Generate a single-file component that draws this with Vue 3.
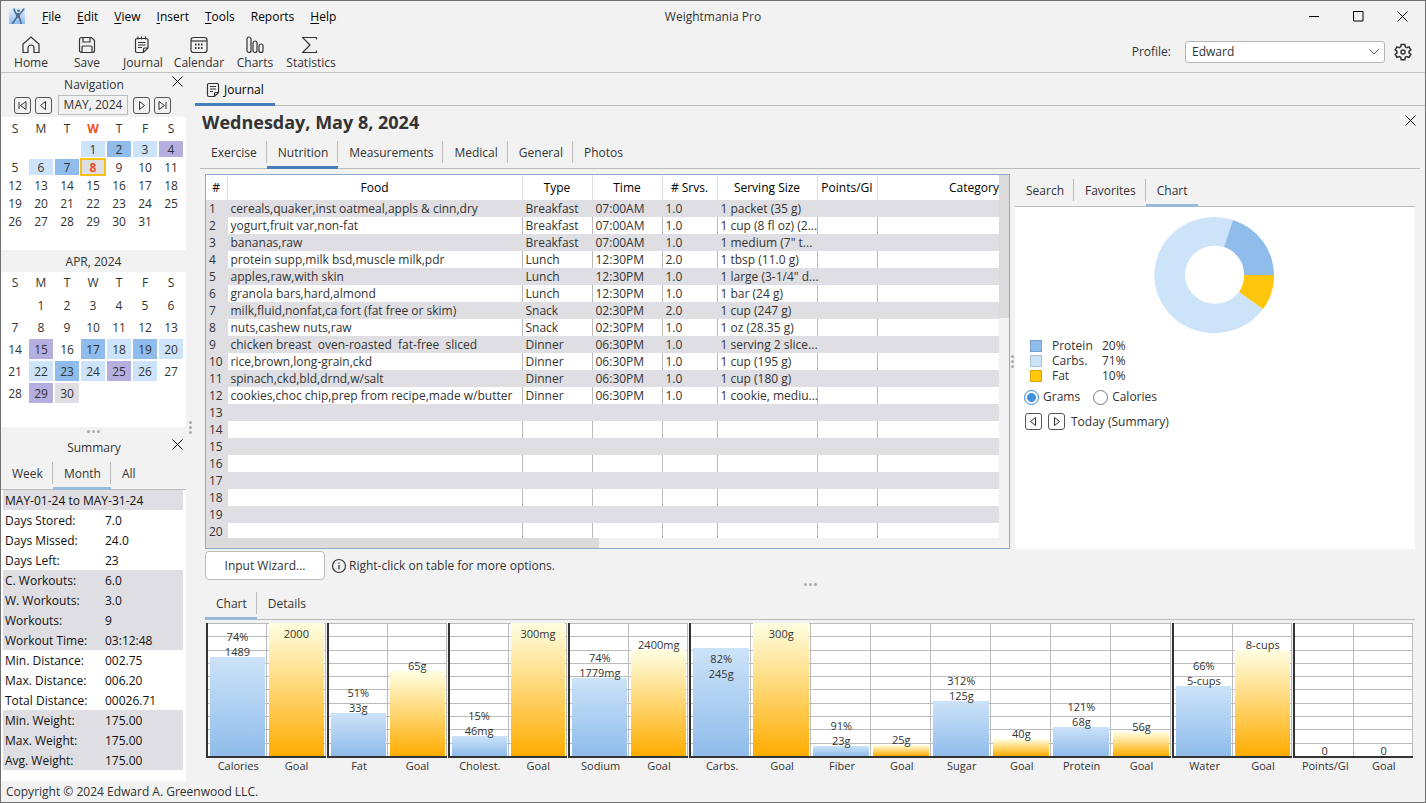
<script setup>
import { ref } from 'vue'

const menus = ['File', 'Edit', 'View', 'Insert', 'Tools', 'Reports', 'Help']
const tools = ['Home', 'Save', 'Journal', 'Calendar', 'Charts', 'Statistics']
const weekdays = ['S', 'M', 'T', 'W', 'T', 'F', 'S']

const journalTabs = ['Exercise', 'Nutrition', 'Measurements', 'Medical', 'General', 'Photos']
const sideTabs = ['Search', 'Favorites', 'Chart']
const summaryTabs = ['Week', 'Month', 'All']
const bottomTabs = ['Chart', 'Details']

const journalTab = ref('Nutrition')
const sideTab = ref('Chart')
const summaryTab = ref('Month')
const bottomTab = ref('Chart')
const profile = ref('Edward')
const unit = ref('grams')

function weeks(offset, days, marks) {
  const cells = []
  for (let i = 0; i < offset; i++) cells.push({ day: '', mark: '' })
  for (let d = 1; d <= days; d++) cells.push({ day: d, mark: marks[d] || '' })
  while (cells.length % 7) cells.push({ day: '', mark: '' })
  const rows = []
  for (let i = 0; i < cells.length; i += 7) rows.push(cells.slice(i, i + 7))
  return rows
}

const may = weeks(3, 31, {
  1: 'light', 2: 'blue', 3: 'light', 4: 'purple', 6: 'light', 7: 'blue', 8: 'today'
})
const april = weeks(1, 30, {
  15: 'purple', 17: 'blue', 18: 'light', 19: 'blue', 20: 'light', 22: 'light', 23: 'blue',
  24: 'light', 25: 'purple', 26: 'light', 29: 'purple', 30: 'grey'
})

const summary = [
  ['Days Stored:', '7.0', false],
  ['Days Missed:', '24.0', false],
  ['Days Left:', '23', false],
  ['C. Workouts:', '6.0', true],
  ['W. Workouts:', '3.0', true],
  ['Workouts:', '9', true],
  ['Workout Time:', '03:12:48', true],
  ['Min. Distance:', '002.75', false],
  ['Max. Distance:', '006.20', false],
  ['Total Distance:', '00026.71', false],
  ['Min. Weight:', '175.00', true],
  ['Max. Weight:', '175.00', true],
  ['Avg. Weight:', '175.00', true]
]

const foods = [
  ['cereals,quaker,inst oatmeal,appls & cinn,dry', 'Breakfast', '07:00AM', '1.0', '1 packet (35 g)'],
  ['yogurt,fruit var,non-fat', 'Breakfast', '07:00AM', '1.0', '1 cup (8 fl oz) (2...'],
  ['bananas,raw', 'Breakfast', '07:00AM', '1.0', '1 medium (7" t...'],
  ['protein supp,milk bsd,muscle milk,pdr', 'Lunch', '12:30PM', '2.0', '1 tbsp (11.0 g)'],
  ['apples,raw,with skin', 'Lunch', '12:30PM', '1.0', '1 large (3-1/4" d...'],
  ['granola bars,hard,almond', 'Lunch', '12:30PM', '1.0', '1 bar (24 g)'],
  ['milk,fluid,nonfat,ca fort (fat free or skim)', 'Snack', '02:30PM', '2.0', '1 cup (247 g)'],
  ['nuts,cashew nuts,raw', 'Snack', '02:30PM', '1.0', '1 oz (28.35 g)'],
  ['chicken breast  oven-roasted  fat-free  sliced', 'Dinner', '06:30PM', '1.0', '1 serving 2 slice...'],
  ['rice,brown,long-grain,ckd', 'Dinner', '06:30PM', '1.0', '1 cup (195 g)'],
  ['spinach,ckd,bld,drnd,w/salt', 'Dinner', '06:30PM', '1.0', '1 cup (180 g)'],
  ['cookies,choc chip,prep from recipe,made w/butter', 'Dinner', '06:30PM', '1.0', '1 cookie, mediu...']
]
while (foods.length < 20) foods.push(['', '', '', '', ''])

const legend = [
  ['Protein', '20%', 'blue'],
  ['Carbs.', '71%', 'light'],
  ['Fat', '10%', 'gold']
]

// size is the bar height out of 133 chart units
const chartGroups = [
  [
    { name: 'Calories', lines: ['74%', '1489'], size: 99 },
    { name: 'Goal', lines: ['2000'], size: 133, goal: true, inside: true }
  ],
  [
    { name: 'Fat', lines: ['51%', '33g'], size: 43 },
    { name: 'Goal', lines: ['65g'], size: 85, goal: true }
  ],
  [
    { name: 'Cholest.', lines: ['15%', '46mg'], size: 20 },
    { name: 'Goal', lines: ['300mg'], size: 133, goal: true, inside: true }
  ],
  [
    { name: 'Sodium', lines: ['74%', '1779mg'], size: 78 },
    { name: 'Goal', lines: ['2400mg'], size: 106, goal: true }
  ],
  [
    { name: 'Carbs.', lines: ['82%', '245g'], size: 108, inside: true },
    { name: 'Goal', lines: ['300g'], size: 133, goal: true, inside: true },
    { name: 'Fiber', lines: ['91%', '23g'], size: 10 },
    { name: 'Goal', lines: ['25g'], size: 11, goal: true },
    { name: 'Sugar', lines: ['312%', '125g'], size: 55 },
    { name: 'Goal', lines: ['40g'], size: 17, goal: true },
    { name: 'Protein', lines: ['121%', '68g'], size: 29 },
    { name: 'Goal', lines: ['56g'], size: 24, goal: true }
  ],
  [
    { name: 'Water', lines: ['66%', '5-cups'], size: 70 },
    { name: 'Goal', lines: ['8-cups'], size: 106, goal: true }
  ],
  [
    { name: 'Points/GI', lines: ['0'], size: 0 },
    { name: 'Goal', lines: ['0'], size: 0, goal: true }
  ]
]
</script>

<template>
  <div class="window">
    <header class="titlebar">
      <div class="title-left">
        <svg class="logo" width="17" height="17" viewBox="0 0 17 17">
          <defs>
            <linearGradient id="logoBg" x1="0" y1="0" x2="0" y2="1">
              <stop offset="0" stop-color="#e3f0fb" />
              <stop offset="1" stop-color="#8fbdf0" />
            </linearGradient>
          </defs>
          <rect width="16" height="16" fill="url(#logoBg)" />
          <path d="M5 .5C5 4 7.500 5 8 8C8.500 10 5 12 3.500 16M15 .5C13.500 4 10.500 5 10 8C10 10 12 12 12 16" fill="none" stroke="#4a7093" stroke-width="1.700" />
          <path d="M7.500 5h3v5h-2.500z" fill="#4a7093" />
          <circle cx="9.500" cy="2.800" r="1.400" fill="#5b7894" />
          <path d="M9 7.500v2" stroke="#cf5b45" stroke-width="1" />
        </svg>
        <nav class="menu">
          <button v-for="m in menus" :key="m" type="button"><span :class="{ key: m !== 'Reports' }">{{ m[0] }}</span>{{ m.slice(1) }}</button>
        </nav>
      </div>
      <div class="title">Weightmania Pro</div>
      <div class="caption">
        <button type="button" aria-label="Minimize">
          <svg width="11" height="11" viewBox="0 0 11 11"><path d="M0 5.500h10" /></svg>
        </button>
        <button type="button" aria-label="Maximize">
          <svg width="11" height="11" viewBox="0 0 11 11"><path d="M.5.500h9.500v9.500H.5z" /></svg>
        </button>
        <button type="button" aria-label="Close">
          <svg width="11" height="11" viewBox="0 0 11 11"><path d="M.5.500l10 10M10.500.500l-10 10" /></svg>
        </button>
      </div>
    </header>

    <div class="toolbar">
      <button v-for="t in tools" :key="t" class="tool" type="button">
        <svg class="icon" width="18" height="18" viewBox="0 0 18 18">
          <path v-if="t === 'Home'" d="M1 9.500V8L9 1l8 7v8.500h-5V12a3 3 0 0 0-6 0v4.500H1z" />
          <template v-else-if="t === 'Save'">
            <path d="M1.500 3.500a2 2 0 0 1 2-2h10l3 3v10a2 2 0 0 1-2 2h-11a2 2 0 0 1-2-2z" />
            <path d="M5 1.500v4.500h7V1.500M4 16.500v-5.500a1 1 0 0 1 1-1h8a1 1 0 0 1 1 1v5.500" />
          </template>
          <template v-else-if="t === 'Journal'">
            <path d="M3 2.500h9a2 2 0 0 1 2 2v7.500l-4.500 4.500H3a1.500 1.500 0 0 1-1.500-1.500V4a1.500 1.500 0 0 1 1.500-1.500zM9.500 16.500v-3.500a1 1 0 0 1 1-1h3.500" />
            <path d="M4 .5v3M7.500.5v3M11.500 .5v3M4 6.500h7.500M4 9h7.500M4 11.500h4" />
          </template>
          <template v-else-if="t === 'Calendar'">
            <rect x="1" y="1.500" width="16" height="15" rx="2.500" />
            <path d="M1 5h16" />
            <path class="dots" d="M8 8.500h1.500M11 8.500h1.500M5 12h1.500M8 12h1.500M11 12h1.500M5 8.500h1.500" />
          </template>
          <template v-else-if="t === 'Charts'">
            <rect x="1" y="1" width="4" height="15.500" rx="2" />
            <rect x="7" y="5" width="4" height="11.500" rx="2" />
            <rect x="13" y="8" width="4" height="8.500" rx="2" />
          </template>
          <path v-else d="M14.500 3.500V1.500H.5l7.500 7.500L.5 16.500h14v-2" />
        </svg>
        <span>{{ t }}</span>
      </button>
      <div class="profile">
        <label for="profile">Profile:</label>
        <div class="select">
          <select id="profile" v-model="profile">
            <option>Edward</option>
          </select>
          <svg class="chevron" width="10" height="6" viewBox="0 0 10 6"><path d="M.5.500L5 5L9.500.500" /></svg>
        </div>
        <button class="gear" type="button" aria-label="Settings">
          <svg class="icon bold" width="18" height="18" viewBox="0 0 18 18">
            <circle cx="9" cy="9" r="2" />
            <path d="M7.200 1.500h3.600l.5 2.300 1.400.8 2.300-.8 1.800 3-1.800 1.500v1.500l1.800 1.500-1.800 3-2.300-.7-1.400.7-.5 2.400H7.200l-.5-2.400-1.400-.7-2.300.7-1.800-3L3 9.800V8.300L1.200 6.800l1.800-3 2.300.8 1.400-.8z" />
          </svg>
        </button>
      </div>
    </div>

    <div class="main">
      <aside class="sidebar">
        <div class="panel-title">
          Navigation
          <button class="close" type="button" aria-label="Close navigation">
            <svg width="11" height="11" viewBox="0 0 11 11"><path d="M.5.500l10 10M10.500.500l-10 10" /></svg>
          </button>
        </div>
        <div class="month-nav">
          <button class="step" type="button" aria-label="First">
            <svg width="11" height="11" viewBox="0 0 11 11"><path d="M2 2v7M9 1.500v8L3.500 5.500z" /></svg>
          </button>
          <button class="step" type="button" aria-label="Previous">
            <svg width="11" height="11" viewBox="0 0 11 11"><path d="M7.500 1.500v8L2.500 5.500z" /></svg>
          </button>
          <button class="month" type="button">MAY, 2024</button>
          <button class="step" type="button" aria-label="Next">
            <svg width="11" height="11" viewBox="0 0 11 11"><path d="M3.500 1.500v8L8.500 5.500z" /></svg>
          </button>
          <button class="step" type="button" aria-label="Last">
            <svg width="11" height="11" viewBox="0 0 11 11"><path d="M9 2v7M2 1.500v8L7.500 5.500z" /></svg>
          </button>
        </div>
        <div class="calendar may">
          <table>
            <thead>
              <tr>
                <th v-for="(w, i) in weekdays" :key="i" :class="{ now: i === 3 }">{{ w }}</th>
              </tr>
            </thead>
            <tbody>
              <tr v-for="(row, r) in may" :key="r">
                <td v-for="(c, i) in row" :key="i"><span :class="c.mark">{{ c.day }}</span></td>
              </tr>
            </tbody>
          </table>
        </div>
        <div class="month-title">APR, 2024</div>
        <div class="calendar april">
          <table>
            <thead>
              <tr>
                <th v-for="(w, i) in weekdays" :key="i">{{ w }}</th>
              </tr>
            </thead>
            <tbody>
              <tr v-for="(row, r) in april" :key="r">
                <td v-for="(c, i) in row" :key="i"><span :class="c.mark">{{ c.day }}</span></td>
              </tr>
            </tbody>
          </table>
        </div>
        <div class="splitter"><i></i><i></i><i></i></div>
        <div class="panel-title">
          Summary
          <button class="close" type="button" aria-label="Close summary">
            <svg width="11" height="11" viewBox="0 0 11 11"><path d="M.5.500l10 10M10.500.500l-10 10" /></svg>
          </button>
        </div>
        <div class="tabs summary-tabs">
          <button v-for="t in summaryTabs" :key="t" class="tab soft" :class="{ active: t === summaryTab }" type="button" @click="summaryTab = t"><span>{{ t }}</span></button>
        </div>
        <div class="summary">
          <table>
            <colgroup>
              <col class="c-name"><col>
            </colgroup>
            <tbody>
              <tr class="shade">
                <td colspan="2">MAY-01-24 to MAY-31-24</td>
              </tr>
              <tr v-for="s in summary" :key="s[0]" :class="{ shade: s[2] }">
                <td>{{ s[0] }}</td>
                <td>{{ s[1] }}</td>
              </tr>
            </tbody>
          </table>
        </div>
      </aside>

      <div class="splitter vertical"><i></i><i></i><i></i></div>

      <main class="journal">
        <div class="doc-tabs">
          <button class="doc-tab" type="button">
            <svg class="icon" width="14" height="16" viewBox="0 0 14 16">
              <path d="M3 1.500h8a1.500 1.500 0 0 1 1.500 1.500v7.500L8.500 14.500H3A1.500 1.500 0 0 1 1.500 13V3A1.500 1.500 0 0 1 3 1.500zM8.500 14.500v-3a1 1 0 0 1 1-1h3M4 4.500h6M4 7h6M4 9.500h3" />
            </svg>
            Journal
          </button>
        </div>
        <div class="heading">
          <h1>Wednesday, May 8, 2024</h1>
          <button class="close" type="button" aria-label="Close journal">
            <svg width="11" height="11" viewBox="0 0 11 11"><path d="M.5.500l10 10M10.500.500l-10 10" /></svg>
          </button>
        </div>
        <div class="tabs journal-tabs">
          <button v-for="t in journalTabs" :key="t" class="tab" :class="{ active: t === journalTab }" type="button" @click="journalTab = t"><span>{{ t }}</span></button>
        </div>

        <div class="work">
          <div class="food-box">
            <div class="food-view">
              <table class="foods">
                <colgroup>
                  <col class="c-num"><col class="c-food"><col class="c-type"><col class="c-time">
                  <col class="c-srvs"><col class="c-size"><col class="c-points"><col class="c-cat">
                </colgroup>
                <thead>
                  <tr>
                    <th>#</th>
                    <th>Food</th>
                    <th>Type</th>
                    <th>Time</th>
                    <th># Srvs.</th>
                    <th>Serving Size</th>
                    <th>Points/GI</th>
                    <th>Category</th>
                  </tr>
                </thead>
                <tbody>
                  <tr v-for="(f, i) in foods" :key="i">
                    <td>{{ i + 1 }}</td>
                    <td v-for="(v, k) in f" :key="k">{{ v }}</td>
                    <td></td>
                    <td></td>
                  </tr>
                </tbody>
              </table>
            </div>
            <div class="vbar"><div></div></div>
            <div class="hbar"><div></div></div>
          </div>

          <div class="splitter vertical thin"><i></i><i></i><i></i></div>

          <section class="side">
            <div class="tabs">
              <button v-for="t in sideTabs" :key="t" class="tab soft" :class="{ active: t === sideTab }" type="button" @click="sideTab = t"><span>{{ t }}</span></button>
            </div>
            <div class="side-body">
              <svg class="donut" width="120" height="116" viewBox="-60 -58 120 116">
                <path d="M19 -55A60 58 0 1 0 49 34L25 17A30 29 0 1 1 10 -28z" fill="#cce3f9" />
                <path d="M60 0A60 58 0 0 0 19 -55L10 -28A30 29 0 0 1 30 0z" fill="#8fbcea" />
                <path d="M49 34A60 58 0 0 0 60 0H30A30 29 0 0 1 25 17z" fill="#ffc60b" />
              </svg>
              <ul class="legend">
                <li v-for="l in legend" :key="l[0]">
                  <i :class="l[2]"></i><span class="label">{{ l[0] }}</span><span>{{ l[1] }}</span>
                </li>
              </ul>
              <div class="units">
                <label><input v-model="unit" type="radio" value="grams">Grams</label>
                <label><input v-model="unit" type="radio" value="calories">Calories</label>
              </div>
              <div class="period">
                <button class="step" type="button" aria-label="Previous">
                  <svg width="11" height="11" viewBox="0 0 11 11"><path d="M7.500 1.500v8L2.500 5.500z" /></svg>
                </button>
                <button class="step" type="button" aria-label="Next">
                  <svg width="11" height="11" viewBox="0 0 11 11"><path d="M3.500 1.500v8L8.500 5.500z" /></svg>
                </button>
                <span>Today (Summary)</span>
              </div>
            </div>
          </section>
        </div>

        <div class="actions">
          <button class="wizard" type="button">Input Wizard...</button>
          <svg class="icon" width="16" height="16" viewBox="0 0 16 16">
            <circle cx="8" cy="8" r="6.500" />
            <path d="M8 7v4.500M8 4.500v1.200" />
          </svg>
          <span>Right-click on table for more options.</span>
        </div>

        <div class="splitter wide"><i></i><i></i><i></i></div>

        <div class="tabs bottom-tabs">
          <button v-for="t in bottomTabs" :key="t" class="tab soft" :class="{ active: t === bottomTab }" type="button" @click="bottomTab = t"><span>{{ t }}</span></button>
        </div>
        <div class="charts">
          <div v-for="(g, gi) in chartGroups" :key="gi" class="group">
            <div class="plot">
              <div class="lines"><i v-for="n in 10" :key="n"></i></div>
              <div v-for="(b, i) in g" :key="i" class="slot">
                <div v-if="!b.inside" class="values">
                  <div v-for="v in b.lines" :key="v">{{ v }}</div>
                </div>
                <div v-if="b.size" class="bar" :class="{ goal: b.goal }" :style="{ height: (b.size / 133) * 100 + '%' }">
                  <template v-if="b.inside">
                    <div v-for="v in b.lines" :key="v">{{ v }}</div>
                  </template>
                </div>
              </div>
            </div>
            <div class="names">
              <span v-for="(b, i) in g" :key="i">{{ b.name }}</span>
            </div>
          </div>
        </div>
      </main>
    </div>

    <footer class="status">Copyright © 2024 Edward A. Greenwood LLC.</footer>
  </div>
</template>

<style>
body {
  background: #f2f2f2;
}
</style>

<style scoped>
* {
  box-sizing: border-box;
}

.window {
  display: flex;
  flex-direction: column;
  min-height: 100vh;
  border: 1px solid #707070;
  background: #f2f2f2;
  color: #333;
  font-family: 'Open Sans', 'Noto Sans', sans-serif;
  font-size: 12px;
  line-height: 16px;
}

button {
  border: none;
  background: none;
  padding: 0;
  margin: 0;
  color: inherit;
  font: inherit;
}

svg {
  display: block;
  flex: none;
}

table {
  border-collapse: collapse;
  table-layout: fixed;
}

.icon {
  fill: none;
  stroke: #333;
  stroke-width: 1.2;
}

.icon.bold {
  stroke-width: 1.5;
}

.icon .dots {
  stroke-width: 2;
}

/* title bar */
.titlebar {
  display: grid;
  grid-template-columns: 1fr auto 1fr;
  align-items: center;
  height: 31px;
}

.title-left {
  display: flex;
  align-items: center;
  padding-left: 8px;
  gap: 16px;
}

.menu {
  display: flex;
  gap: 16px;
  color: #000;
}

.menu .key {
  text-decoration: underline;
  text-underline-offset: 2px;
}

.caption {
  display: flex;
  justify-content: flex-end;
  gap: 33px;
  padding-right: 17px;
}

.caption svg,
.close svg {
  fill: none;
  stroke: #000;
}

/* toolbar */
.toolbar {
  display: flex;
  height: 41px;
  padding-left: 2px;
  border-bottom: 1px solid #c4c4c4;
}

.tool {
  display: flex;
  flex-direction: column;
  align-items: center;
  gap: 1px;
  width: 56px;
  padding-top: 4px;
}

.profile {
  display: flex;
  align-items: center;
  margin-left: auto;
  padding-right: 13px;
}

.select {
  position: relative;
  width: 200px;
  margin: 0 9px 0 14px;
}

.select select {
  display: block;
  width: 100%;
  height: 22px;
  padding: 0 6px;
  border: 1px solid #b5b5b5;
  border-radius: 3px;
  background: #fff;
  color: #333;
  font: inherit;
  appearance: none;
}

.chevron {
  position: absolute;
  right: 6px;
  top: 8px;
  fill: none;
  stroke: #555;
}

.main {
  display: flex;
  flex: 1;
}

/* sidebar */
.sidebar {
  display: flex;
  flex-direction: column;
  width: 185px;
}

.panel-title {
  position: relative;
  height: 22px;
  line-height: 24px;
  text-align: center;
  padding-left: 1px;
}

.panel-title .close {
  position: absolute;
  right: 3px;
  top: 3px;
}

.month-nav {
  display: flex;
  justify-content: center;
  align-items: center;
  gap: 4px;
  height: 22px;
  padding: 0 2px 2px 0;
}

.step {
  display: flex;
  align-items: center;
  justify-content: center;
  width: 17px;
  height: 17px;
  border: 1px solid #555;
  border-radius: 3px;
}

.step svg {
  fill: none;
  stroke: #333;
}

.month {
  width: 70px;
  height: 20px;
  margin: 0 1px 0 2px;
  border: 1px solid #bbb;
}

.calendar {
  padding-left: 1px;
  background: #fff;
}

.calendar table {
  width: 182px;
}

.calendar th,
.calendar td {
  padding: 1px;
  text-align: center;
}

.calendar th {
  font-weight: normal;
}

.calendar th.now {
  color: #ee5024;
  font-weight: bold;
}

.calendar span {
  display: block;
}

.may {
  padding-top: 3px;
  padding-bottom: 20px;
}

.may th {
  height: 20px;
  padding-bottom: 3px;
}

.may span {
  height: 16px;
  line-height: 17px;
}

.april {
  padding-bottom: 23px;
}

.april th {
  height: 22px;
}

.april span {
  height: 20px;
  line-height: 21px;
}

.month-title {
  height: 22px;
  line-height: 23px;
  text-align: center;
}

.light {
  background: #cce3f9;
}

.blue {
  background: #8fbcea;
}

.purple {
  background: #b5afe0;
}

.grey {
  background: #dfdfe3;
}

.gold {
  background: #ffc60b;
}

.calendar .today {
  background: #dfdfe3;
  box-shadow: 0 0 0 1px #f7c11d, inset 0 0 0 1px #f7c11d;
  color: #ee5024;
  font-weight: bold;
}

.splitter {
  display: flex;
  align-items: center;
  justify-content: center;
  gap: 2px;
  height: 9px;
}

.splitter i {
  width: 3px;
  height: 3px;
  border-radius: 2px;
  background: #aaa;
}

.splitter.vertical {
  flex-direction: column;
  width: 9px;
  height: auto;
}

.splitter.thin {
  width: 5px;
}

.splitter.wide {
  height: 12px;
  padding-bottom: 3px;
}

/* tabs */
.tabs {
  display: flex;
  border-bottom: 1px solid #bbb;
}

.tab {
  height: 28px;
  margin-bottom: -1px;
  padding-bottom: 3px;
  border-bottom: 3px solid transparent;
}

.tab span {
  display: block;
  height: 22px;
  padding: 0 9px 0 11px;
  border-right: 1px solid #bbb;
  line-height: 24px;
}

.tab:last-child span {
  border-right-color: transparent;
}

.tab.active {
  border-bottom-color: #4680b8;
}

.tab.soft.active {
  border-bottom-color: #98b9d8;
}

.summary-tabs {
  margin-top: 4px;
}

.summary {
  flex: 1;
  padding: 0 3px 0 2px;
  background: #fff;
  color: #111;
}

.summary table {
  width: 100%;
}

.summary td {
  height: 20px;
  padding: 1px 2px 0;
}

.c-name {
  width: 100px;
}

.shade {
  background: #dfdfe3;
}

/* journal */
.journal {
  flex: 1;
  min-width: 0;
}

.doc-tabs {
  display: flex;
  height: 33px;
  border-bottom: 1px solid #bbb;
}

.doc-tab {
  display: flex;
  align-items: center;
  gap: 4px;
  height: 33px;
  padding: 3px 11px 0;
  border-bottom: 3px solid #4680b8;
  color: #000;
}

.heading {
  display: flex;
  justify-content: space-between;
  height: 35px;
  padding: 0 9px 0 7px;
}

.heading h1 {
  margin: 0;
  font-size: 18px;
  line-height: 32px;
}

.heading .close {
  height: 28px;
}

.journal-tabs {
  margin: 0 5px;
}

.work {
  display: flex;
  margin: 5px 10px 0;
}

.food-box {
  display: grid;
  grid-template: 363px 10px / 1fr 10px;
  flex: 1;
  min-width: 0;
  border: 1px solid #8aa9cb;
}

.food-view {
  min-width: 0;
  overflow: hidden;
}

.foods {
  width: 865px;
}

.c-num { width: 21px; }
.c-food { width: 295px; }
.c-type { width: 70px; }
.c-time { width: 70px; }
.c-srvs { width: 55px; }
.c-size { width: 100px; }
.c-points { width: 60px; }
.c-cat { width: 194px; }

.foods th {
  height: 25px;
  padding: 0;
  border-right: 1px solid #e0e0e0;
  background: #fff;
  color: #000;
  font-weight: normal;
  white-space: nowrap;
}

.foods td {
  height: 17px;
  padding: 0 3px;
  border-right: 1px solid #bbb;
  background: #fff;
  white-space: pre;
}

.foods td:first-child,
.foods tr:nth-child(odd) td {
  border-right-color: #dfdfe3;
  background: #dfdfe3;
}

.vbar {
  background: #f2f2f2;
}

.vbar div {
  height: 143px;
  background: #dbdbdb;
}

.hbar {
  grid-column: 1 / -1;
  background: #f2f2f2;
}

.hbar div {
  width: 49%;
  height: 10px;
  background: #dbdbdb;
}

.side {
  display: flex;
  flex-direction: column;
  width: 400px;
  padding-top: 5px;
}

.side-body {
  flex: 1;
  padding: 10px 12px 0 10px;
  background: #fff;
}

.donut {
  margin: 0 auto;
}

.legend {
  margin: 5px 0 0;
  padding: 0 5px;
  list-style: none;
}

.legend li {
  display: flex;
  align-items: center;
  height: 15px;
}

.legend i {
  width: 12px;
  height: 12px;
  margin-right: 10px;
  border: 1px solid rgba(0, 0, 0, 0.15);
}

.legend .label {
  width: 50px;
}

.units {
  display: flex;
  gap: 14px;
  margin-top: 6px;
}

.units label {
  display: flex;
  align-items: center;
  gap: 4px;
}

.units input {
  appearance: none;
  width: 15px;
  height: 15px;
  margin: 0 0 0 -1px;
  border: 1px solid #777;
  border-radius: 50%;
  background: #fff;
}

.units input:checked {
  border-color: #2f83d0;
  background: radial-gradient(circle, #3f93dd 4px, #fff 5px);
}

.period {
  display: flex;
  align-items: center;
  gap: 6px;
  margin-top: 8px;
}

.actions {
  display: flex;
  align-items: center;
  gap: 2px;
  margin: 2px 10px 0;
}

.wizard {
  width: 120px;
  height: 29px;
  margin-right: 4px;
  border: 1px solid #bbb;
  border-radius: 4px;
  background: #fff;
}

.bottom-tabs {
  margin: 0 10px;
}

/* nutrient charts */
.charts {
  display: grid;
  grid-template-columns: repeat(4, 1fr) 4fr 1fr 1fr;
  margin: 3px 11px 0;
  font-size: 11px;
  line-height: 15px;
  text-align: center;
}

.group {
  min-width: 0;
  padding-right: 1px;
}

.plot {
  position: relative;
  display: flex;
  height: 135px;
  border-left: 2px solid #333;
  border-bottom: 2px solid #333;
  background: #fff;
}

.lines {
  position: absolute;
  inset: 0;
  display: flex;
  flex-direction: column;
}

.lines i {
  flex: 1;
  border-top: 1px solid #bbb;
}

.slot {
  position: relative;
  display: flex;
  flex: 1;
  flex-direction: column;
  justify-content: flex-end;
  min-width: 0;
  padding: 0 1px 0 2px;
  border-right: 1px solid #bbb;
}

.values {
  position: relative;
  z-index: 1;
  margin-bottom: -2px;
}

.bar {
  flex: none;
  padding-top: 3px;
  background: linear-gradient(#cce3f9, #8fbcea);
}

.bar.goal {
  background: linear-gradient(#ffffe2, #ffac00);
}

.names {
  display: flex;
  padding-left: 3px;
  line-height: 16px;
}

.names span {
  flex: 1;
  min-width: 0;
}

.status {
  height: 21px;
  padding-left: 5px;
  line-height: 21px;
}
</style>
